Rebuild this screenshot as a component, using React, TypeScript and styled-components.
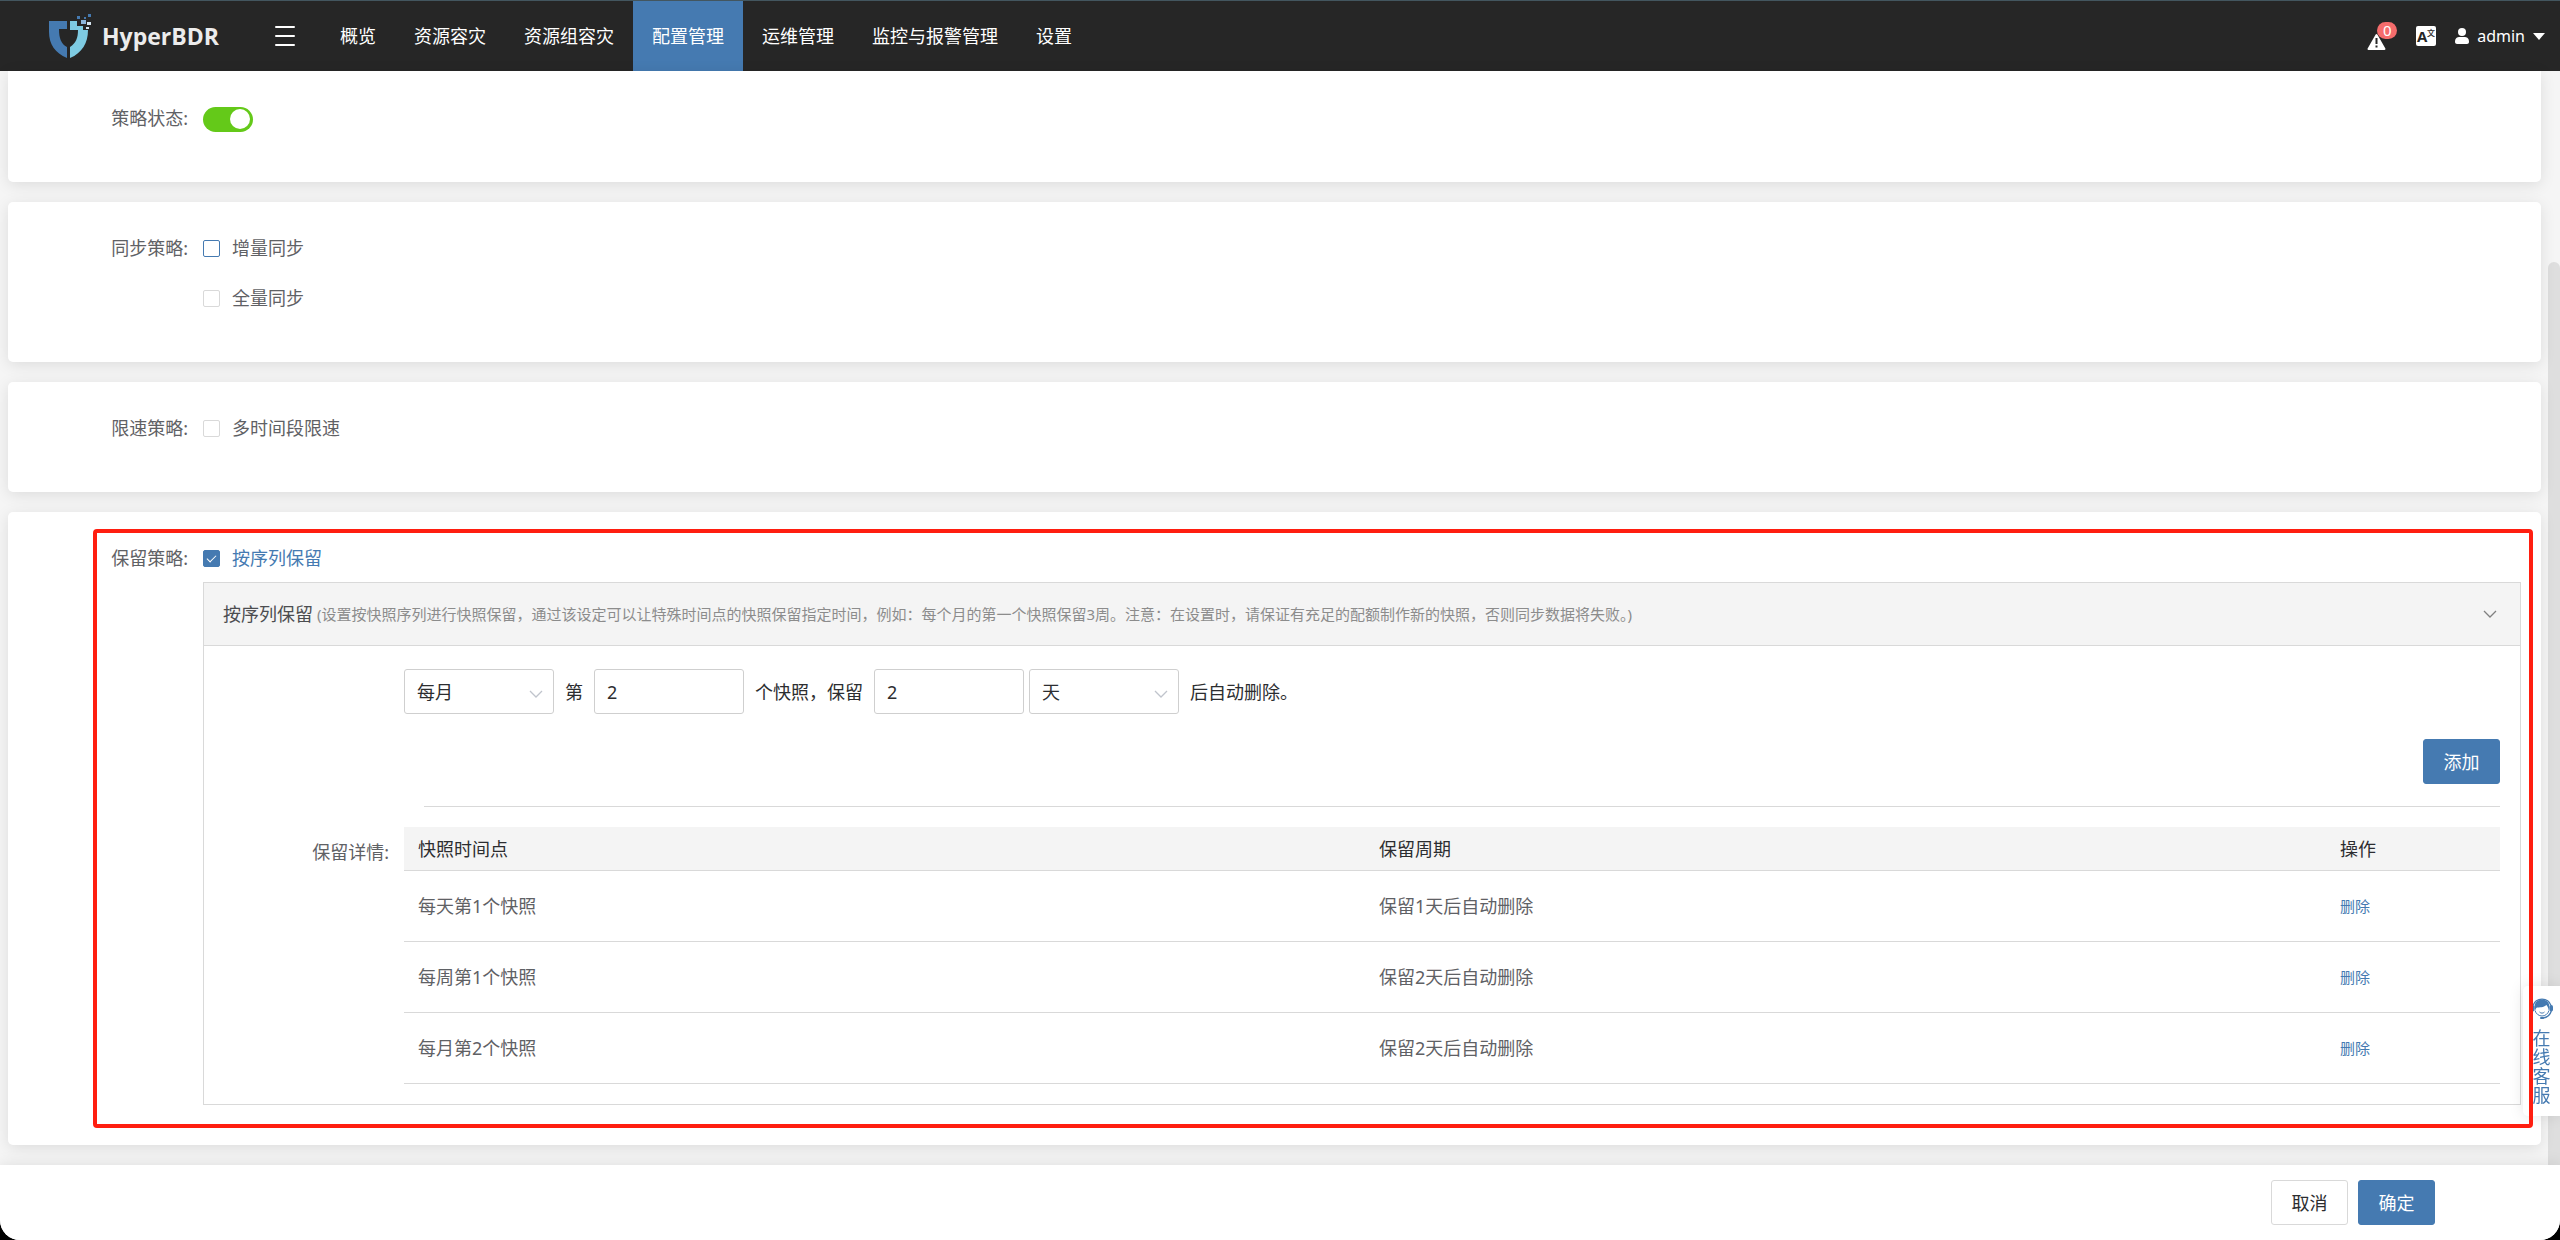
import React, { useState } from "react";
import styled, { createGlobalStyle } from "styled-components";

const blue = "#457ab1";
const line = "#d9d9d9";
const text = "#5f6165";
const dark = "#2c2d30";

const GlobalStyle = createGlobalStyle`
  *, *::before, *::after { box-sizing: border-box; }
  body {
    margin: 0;
    background: #000;
    color: ${text};
    font: 400 18px/24px "Noto Sans", "Noto Sans CJK SC", sans-serif;
  }
  button, input, select { font: inherit; color: inherit; margin: 0; }
`;

const Page = styled.div`
  min-height: 100vh;
  display: flex;
  flex-direction: column;
  overflow: hidden;
  background: #f5f5f5;
  border-radius: 0 0 20px 20px;
`;

const Header = styled.header`
  display: flex;
  align-items: center;
  height: 71px;
  padding: 0 15px 0 48px;
  background: #262626;
  border-top: 1px solid #43565f;
  color: #fff;
`;

const Brand = styled.a`
  display: flex;
  align-items: center;
  gap: 10px;
  width: 227px;
  color: #ececec;
  font: 700 23px/32px "Open Sans", "Noto Sans", sans-serif;
  text-decoration: none;
`;

const IconButton = styled.button`
  display: flex;
  padding: 0;
  border: 0;
  background: none;
  cursor: pointer;
`;

const Nav = styled.nav`
  display: flex;
  align-self: stretch;
  margin-left: 26px;
`;

const NavLink = styled.a<{ $active?: boolean }>`
  display: flex;
  align-items: center;
  padding: 0 19px;
  color: #fff;
  background: ${(p) => (p.$active ? blue : "transparent")};
  text-decoration: none;
`;

const Tools = styled.div`
  display: flex;
  align-items: center;
  gap: 19px;
  margin-left: auto;
`;

const AlertButton = styled(IconButton)`
  position: relative;
  width: 30px;
  height: 28px;
  align-items: flex-end;
`;

const Badge = styled.span`
  position: absolute;
  top: 0;
  right: 0;
  width: 20px;
  height: 17px;
  border-radius: 9px;
  background: #f56c6c;
  color: #fff;
  font-size: 15px;
  line-height: 17px;
`;

const UserButton = styled(IconButton)`
  align-items: center;
  gap: 8px;
  font-size: 16px;
`;

const Main = styled.main`
  flex: 1;
  display: flex;
`;

const Content = styled.div`
  flex: 1;
  min-width: 0;
  display: flex;
  flex-direction: column;
  gap: 20px;
  padding: 0 7px 20px 8px;
`;

const ScrollTrack = styled.div`
  width: 12px;
  padding-top: 191px;
  display: flex;
`;

const ScrollThumb = styled.div`
  flex: 1;
  border-radius: 6px 6px 0 0;
  background: #dedede;
`;

const Card = styled.section<{ $scrolled?: boolean }>`
  position: relative;
  padding: ${(p) => (p.$scrolled ? "27px 20px 44px 0" : "26px 20px 44px 0")};
  border-radius: ${(p) => (p.$scrolled ? "0 0 5px 5px" : "5px")};
  background: #fff;
  box-shadow: 0 3px 15px rgba(0, 0, 0, 0.1);
`;

const RetentionCard = styled(Card)`
  padding-bottom: 40px;
`;

const FormItem = styled.div<{ $label: number }>`
  display: grid;
  grid-template-columns: ${(p) => p.$label}px minmax(0, 1fr);
`;

const ItemLabel = styled.span`
  padding-right: 15px;
  line-height: 40px;
  text-align: right;
`;

const Stack = styled.div`
  display: flex;
  flex-direction: column;
  gap: 10px;
`;

const CheckRow = styled.label<{ $on?: boolean }>`
  display: flex;
  align-items: center;
  gap: 12px;
  height: 40px;
  color: ${(p) => (p.$on ? blue : "inherit")};
`;

const CheckBox = styled.input<{ $focus?: boolean }>`
  appearance: none;
  display: flex;
  justify-content: center;
  width: 17px;
  height: 17px;
  border: 1px solid ${(p) => (p.$focus ? blue : line)};
  border-radius: 2px;
  background: #fff;
  &:checked { border-color: ${blue}; background: ${blue}; }
  &:checked::after {
    content: "";
    width: 5px;
    height: 9px;
    margin-top: 2px;
    border: solid #fff;
    border-width: 0 1px 1px 0;
    transform: rotate(45deg);
  }
`;

const Switch = styled.input`
  appearance: none;
  display: flex;
  align-items: center;
  width: 50px;
  height: 25px;
  padding: 0 3px;
  border-radius: 13px;
  background: #bfbfbf;
  &::before {
    content: "";
    width: 20px;
    height: 20px;
    border-radius: 50%;
    background: #fff;
  }
  &:checked { background: #64c919; justify-content: flex-end; }
`;

const SwitchRow = styled.div`
  display: flex;
  align-items: center;
  height: 42px;
`;

const StatusItem = styled.div`
  display: grid;
  grid-template-columns: 195px minmax(0, 1fr);
  height: 40px;
`;

const Panel = styled.div`
  margin-top: 4px;
  border: 1px solid ${line};
`;

const PanelHead = styled.div`
  display: flex;
  align-items: center;
  gap: 4px;
  height: 63px;
  padding: 0 23px 0 19px;
  border-bottom: 1px solid ${line};
  background: #f4f4f4;
  color: #4c4d50;
`;

const Hint = styled.small`
  flex: 1;
  color: #8c8c8c;
  font-size: 15px;
`;

const PanelBody = styled.div`
  padding: 23px 20px 20px 0;
`;

const RuleRow = styled.div`
  display: flex;
  align-items: center;
  margin-left: 200px;
  color: ${dark};
`;

const RuleText = styled.span`
  padding: 0 11px;
`;

const field = `
  width: 150px;
  height: 45px;
  padding: 0 12px;
  border: 1px solid #cfcfcf;
  border-radius: 3px;
  background: #fff;
`;

const TextInput = styled.input`
  ${field}
`;

const SelectBox = styled.span`
  position: relative;
  display: flex;
  ${TextInput} + & { margin-left: 5px; }
  svg {
    position: absolute;
    top: 21px;
    right: 11px;
    pointer-events: none;
  }
`;

const Select = styled.select`
  ${field}
  appearance: none;
`;

const Button = styled.button<{ $primary?: boolean }>`
  width: 77px;
  height: 45px;
  padding: 0;
  border: 1px solid ${(p) => (p.$primary ? blue : line)};
  border-radius: 3px;
  background: ${(p) => (p.$primary ? blue : "#fff")};
  color: ${(p) => (p.$primary ? "#fff" : dark)};
  cursor: pointer;
`;

const AddRow = styled.div`
  display: flex;
  justify-content: flex-end;
  margin-top: 25px;
`;

const Divider = styled.hr`
  height: 1px;
  margin: 22px 0 20px 220px;
  border: 0;
  background: ${line};
`;

const DetailLabel = styled(ItemLabel)`
  line-height: 50px;
`;

const Table = styled.table`
  width: 100%;
  border-collapse: separate;
  border-spacing: 0;
  table-layout: fixed;
  text-align: left;
  th, td { padding: 0 14px; border-bottom: 1px solid ${line}; }
  th { height: 44px; background: #f4f4f4; color: ${dark}; font-weight: inherit; }
  td { height: 71px; }
  th:last-child { width: 174px; }
`;

const LinkButton = styled.button`
  display: block;
  padding: 0;
  border: 0;
  background: none;
  color: ${blue};
  font-size: 15px;
  cursor: pointer;
`;

const Highlight = styled.div`
  position: absolute;
  z-index: 3;
  inset: 17px 8px 17px 85px;
  border: 4px solid #ff1e10;
  border-radius: 4px;
  pointer-events: none;
`;

const Footer = styled.footer`
  position: relative;
  display: flex;
  justify-content: flex-end;
  gap: 10px;
  padding: 15px 125px 15px 15px;
  background: #fff;
  box-shadow: 0 0 15px rgba(0, 0, 0, 0.1);
`;

const Support = styled.a`
  position: fixed;
  z-index: 2;
  right: 0;
  bottom: 124px;
  display: flex;
  flex-direction: column;
  align-items: center;
  gap: 10px;
  width: 37px;
  height: 130px;
  padding: 11px 0;
  border-radius: 5px 0 0 5px;
  background: #fff;
  box-shadow: 0 0 15px rgba(0, 0, 0, 0.1);
  color: ${blue};
  line-height: 19px;
  text-decoration: none;
`;

const SupportText = styled.span`
  width: 18px;
`;

const Logo = () => (
  <svg width="44" height="44" viewBox="0 0 44 44" aria-hidden="true">
    <path fill="#457ab1" d="M1 7h18v8h-8c0 9 2 15 8 18v11C7 39 1 30 1 18z" />
    <path fill="#7ecbe2" d="M22 7h7v5h6v4h5c0 13-6 23-18 28V33c6-4 8-9 8-17h-8z" />
    <path fill="#8db6dc" d="M33 6h5v4h-5z" />
    <path fill="#457ab1" d="M29 2h3v3h-3zM40 0h3v3h-3zM36 3h2v2h-2z" />
    <path fill="#d5e4ef" d="M39 8h4v3h-4zM38 13h3v2h-3z" />
  </svg>
);

const MenuIcon = () => (
  <svg width="20" height="20" viewBox="0 0 20 20" stroke="#fff" strokeWidth="2" strokeLinecap="round">
    <path d="M1 1h18M1 10h18M1 19h18" />
  </svg>
);

const AlertIcon = () => (
  <svg width="19" height="17" viewBox="0 0 19 17">
    <path fill="#fff" stroke="#fff" strokeWidth="2" strokeLinejoin="round" d="M9.500 2L17.500 16H1.500z" />
    <path stroke="#262626" strokeWidth="2" d="M9.500 5v6M9.500 12.500v2" />
  </svg>
);

const LanguageIcon = () => (
  <svg width="20" height="20" viewBox="0 0 20 20">
    <rect width="20" height="20" rx="2" fill="#fff" />
    <text x="1" y="16" fill="#262626" fontSize="15" fontWeight="700" fontFamily="Open Sans, sans-serif">A</text>
    <text x="11" y="10" fill="#262626" fontSize="8" fontWeight="500" fontFamily="Noto Sans CJK SC, sans-serif">文</text>
  </svg>
);

const UserIcon = () => (
  <svg width="14" height="16" viewBox="0 0 14 16" fill="#fff">
    <circle cx="7" cy="4" r="4" />
    <path d="M0 14c0-4 2-5 5-5h4c3 0 5 1 5 5 0 1-1 2-2 2H2c-1 0-2-1-2-2z" />
  </svg>
);

const Caret = () => (
  <svg width="12" height="7" viewBox="0 0 12 7" fill="#fff">
    <path d="M0 0h12L6 7z" />
  </svg>
);

const Chevron = ({ color }: { color: string }) => (
  <svg width="14" height="8" viewBox="0 0 14 8" fill="none" stroke={color} strokeWidth="1.300">
    <path d="M1 1l6 6 6-6" />
  </svg>
);

const SupportIcon = () => (
  <svg width="22" height="22" viewBox="0 0 22 22">
    <path fill="none" stroke={blue} strokeWidth="1.300" d="M2 8.500a9.500 9.500 0 0118 0" />
    <path fill={blue} d="M3.500 12C3 6 6 2.500 11 2.500S19 6 18.500 12l-.8 1.500c-.2-2.500-1-4-2.200-5.500C12.500 10.500 8 10.500 6 10.500c-1 .5-1.500 1.500-1.700 3z" />
    <rect x="0" y="8" width="3.500" height="6.500" rx="1.700" fill={blue} />
    <rect x="18.500" y="8" width="3.500" height="6.500" rx="1.700" fill={blue} />
    <path fill="none" stroke={blue} d="M4 13.500c1 3.500 4 5.500 7 5.500s6-2 7-5.500M8.500 15c1.500 1.500 3.500 1.500 5 0" />
    <path fill="none" stroke={blue} strokeWidth="1.300" d="M20.300 14c-1 3.500-4 6.500-8.300 7" />
    <rect x="9" y="20" width="4" height="2" rx="1" fill={blue} />
  </svg>
);

const navItems = ["概览", "资源容灾", "资源组容灾", "配置管理", "运维管理", "监控与报警管理", "设置"];

const initialRules = [
  { point: "每天第1个快照", period: "保留1天后自动删除" },
  { point: "每周第1个快照", period: "保留2天后自动删除" },
  { point: "每月第2个快照", period: "保留2天后自动删除" },
];

function Check({ label, focus, initial = false }: { label: string; focus?: boolean; initial?: boolean }) {
  const [on, setOn] = useState(initial);
  return (
    <CheckRow $on={on}>
      <CheckBox type="checkbox" $focus={focus} checked={on} onChange={() => setOn(!on)} />
      {label}
    </CheckRow>
  );
}

export default function App() {
  const [rules, setRules] = useState(initialRules);
  const [cycle, setCycle] = useState("每月");
  const [index, setIndex] = useState("2");
  const [keep, setKeep] = useState("2");
  const [unit, setUnit] = useState("天");

  const addRule = () =>
    setRules([...rules, { point: `${cycle}第${index}个快照`, period: `保留${keep}${unit}后自动删除` }]);

  return (
    <Page>
      <GlobalStyle />
      <Header>
        <Brand href="#">
          <Logo />
          HyperBDR
        </Brand>
        <IconButton aria-label="菜单">
          <MenuIcon />
        </IconButton>
        <Nav>
          {navItems.map((item) => (
            <NavLink key={item} href="#" $active={item === "配置管理"}>
              {item}
            </NavLink>
          ))}
        </Nav>
        <Tools>
          <AlertButton aria-label="报警">
            <AlertIcon />
            <Badge>0</Badge>
          </AlertButton>
          <IconButton aria-label="语言">
            <LanguageIcon />
          </IconButton>
          <UserButton>
            <UserIcon />
            admin
            <Caret />
          </UserButton>
        </Tools>
      </Header>

      <Main>
        <Content>
          <Card $scrolled>
            <StatusItem>
              <ItemLabel as="label" htmlFor="status">策略状态:</ItemLabel>
              <SwitchRow>
                <Switch id="status" type="checkbox" role="switch" defaultChecked />
              </SwitchRow>
            </StatusItem>
          </Card>

          <Card>
            <FormItem $label={195}>
              <ItemLabel>同步策略:</ItemLabel>
              <Stack>
                <Check label="增量同步" focus />
                <Check label="全量同步" />
              </Stack>
            </FormItem>
          </Card>

          <Card>
            <FormItem $label={195}>
              <ItemLabel>限速策略:</ItemLabel>
              <Check label="多时间段限速" />
            </FormItem>
          </Card>

          <RetentionCard>
            <FormItem $label={195}>
              <ItemLabel>保留策略:</ItemLabel>
              <div>
                <Check label="按序列保留" initial />
                <Panel>
                  <PanelHead>
                    按序列保留
                    <Hint>
                      (设置按快照序列进行快照保留，通过该设定可以让特殊时间点的快照保留指定时间，例如：每个月的第一个快照保留3周。注意：在设置时，请保证有充足的配额制作新的快照，否则同步数据将失败。)
                    </Hint>
                    <Chevron color="#808080" />
                  </PanelHead>
                  <PanelBody>
                    <RuleRow>
                      <SelectBox>
                        <Select aria-label="周期" value={cycle} onChange={(e) => setCycle(e.target.value)}>
                          <option>每天</option>
                          <option>每周</option>
                          <option>每月</option>
                        </Select>
                        <Chevron color="#c0c4cc" />
                      </SelectBox>
                      <RuleText>第</RuleText>
                      <TextInput aria-label="第几个快照" value={index} onChange={(e) => setIndex(e.target.value)} />
                      <RuleText>个快照，保留</RuleText>
                      <TextInput aria-label="保留时长" value={keep} onChange={(e) => setKeep(e.target.value)} />
                      <SelectBox>
                        <Select aria-label="单位" value={unit} onChange={(e) => setUnit(e.target.value)}>
                          <option>天</option>
                          <option>周</option>
                          <option>月</option>
                        </Select>
                        <Chevron color="#c0c4cc" />
                      </SelectBox>
                      <RuleText>后自动删除。</RuleText>
                    </RuleRow>
                    <AddRow>
                      <Button $primary onClick={addRule}>添加</Button>
                    </AddRow>
                    <Divider />
                    <FormItem $label={200}>
                      <DetailLabel>保留详情:</DetailLabel>
                      <Table>
                        <thead>
                          <tr>
                            <th>快照时间点</th>
                            <th>保留周期</th>
                            <th>操作</th>
                          </tr>
                        </thead>
                        <tbody>
                          {rules.map((rule, i) => (
                            <tr key={i}>
                              <td>{rule.point}</td>
                              <td>{rule.period}</td>
                              <td>
                                <LinkButton onClick={() => setRules(rules.filter((_, n) => n !== i))}>删除</LinkButton>
                              </td>
                            </tr>
                          ))}
                        </tbody>
                      </Table>
                    </FormItem>
                  </PanelBody>
                </Panel>
              </div>
            </FormItem>
            <Highlight />
          </RetentionCard>
        </Content>
        <ScrollTrack>
          <ScrollThumb />
        </ScrollTrack>
      </Main>

      <Footer>
        <Button>取消</Button>
        <Button $primary>确定</Button>
      </Footer>

      <Support href="#">
        <SupportIcon />
        <SupportText>在线客服</SupportText>
      </Support>
    </Page>
  );
}
